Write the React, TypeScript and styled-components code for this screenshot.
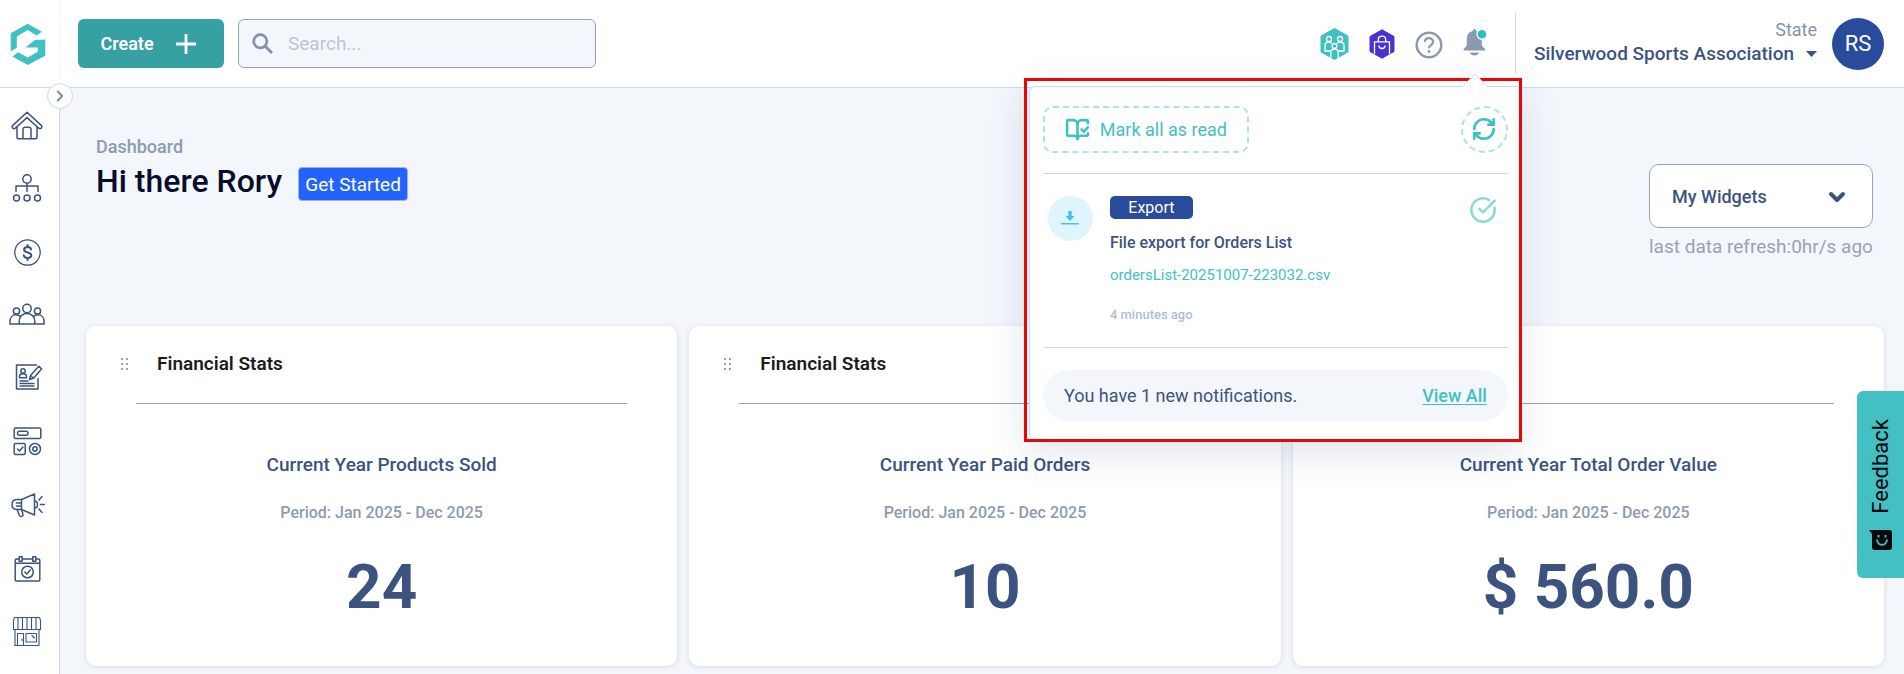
import React from 'react';
import styled, { createGlobalStyle } from 'styled-components';
import { BookOpenCheck, ChevronDown, ChevronRight, CircleCheckBig, RefreshCw } from 'lucide-react';

const color = {
  navy: '#3d537f',
  slate: '#8c9ab1',
  muted: '#8c9cae',
  teal: '#3fc1c4',
  line: '#cfdae8',
  page: '#f3f6fb',
  royal: '#294b9b',
};

const GlobalStyle = createGlobalStyle`
  *, *::before, *::after { box-sizing: border-box; }
  body { margin: 0; background: ${color.page}; font-family: Roboto, "Liberation Sans", sans-serif; color: ${color.navy}; }
  button, input, select { font-family: inherit; }
  h1, h2, h3, p, ul { margin: 0; padding: 0; }
  svg { display: block; flex: none; }
`;

const Page = styled.div`
  min-height: 100vh;
  display: grid;
  grid-template-columns: 60px 1fr;
  grid-template-rows: 88px 1fr;
`;

const Header = styled.header`
  grid-column: 1 / -1;
  display: flex;
  align-items: center;
  background: #fff;
  border-bottom: 1px solid ${color.line};
  padding-right: 20px;
  position: relative;
  z-index: 2;
`;

const LogoLink = styled.a`
  width: 60px;
  align-self: stretch;
  padding-left: 10px;
  display: flex;
  align-items: center;
  border-right: 1px solid #f3f5f9;
`;

const CreateButton = styled.button`
  width: 146px;
  height: 49px;
  margin-left: 18px;
  padding: 0 6px 0 0;
  display: flex;
  align-items: center;
  justify-content: center;
  gap: 22px;
  border: 0;
  border-radius: 6px;
  background: #36a0a3;
  color: #fff;
  font-size: 18px;
  font-weight: 600;
`;

const SearchBox = styled.label`
  width: 358px;
  height: 49px;
  margin-left: 14px;
  padding: 0 13px;
  display: flex;
  align-items: center;
  gap: 13px;
  border: 1px solid #93a4bd;
  border-radius: 6px;
  background: ${color.page};
`;

const SearchInput = styled.input`
  flex: 1;
  min-width: 0;
  border: 0;
  outline: 0;
  background: transparent;
  font-size: 19px;
  color: ${color.navy};
  &::placeholder { color: #bcc6d4; opacity: 1; }
`;

const Tools = styled.div`
  margin-left: auto;
  display: flex;
  align-items: center;
  gap: 20px;
`;

const ToolButton = styled.button`
  border: 0;
  padding: 0;
  background: none;
`;

const BellArea = styled.div`
  position: relative;
`;

const Account = styled.div`
  margin-left: 28px;
  padding-left: 18px;
  height: 61px;
  border-left: 1px solid ${color.line};
  display: flex;
  align-items: center;
  gap: 15px;
`;

const AccountText = styled.div`
  display: flex;
  flex-direction: column;
  align-items: flex-end;
  padding-bottom: 3px;
`;

const AccountLevel = styled.span`
  font-size: 18px;
  line-height: 24px;
  color: #8593ad;
`;

const OrgButton = styled.button`
  display: flex;
  align-items: center;
  gap: 12px;
  border: 0;
  padding: 0;
  background: none;
  color: ${color.navy};
  font-size: 19px;
  font-weight: 500;
  line-height: 24px;
`;

const Avatar = styled.div`
  width: 52px;
  height: 52px;
  border-radius: 50%;
  display: grid;
  place-items: center;
  background: ${color.royal};
  color: #fff;
  font-size: 22px;
`;

const Sidebar = styled.nav`
  position: relative;
  z-index: 3;
  background: #fff;
  border-right: 1px solid ${color.line};
  padding-top: 6px;
`;

const NavLink = styled.a`
  height: 63px;
  padding-left: 9px;
  display: flex;
  align-items: center;
  color: ${color.navy};
`;

const ExpandButton = styled.button`
  position: absolute;
  top: -5px;
  right: -14px;
  width: 26px;
  height: 26px;
  padding: 0;
  display: grid;
  place-items: center;
  border: 1px solid ${color.line};
  border-radius: 50%;
  background: #fff;
  color: #7d8ba3;
`;

const Main = styled.main`
  padding: 0 20px 9px 26px;
  min-width: 0;
`;

const Intro = styled.section`
  display: flex;
  justify-content: space-between;
  padding: 0 11px 65px 10px;
`;

const Greeting = styled.div`
  padding-top: 47px;
`;

const Crumb = styled.p`
  font-size: 18px;
  font-weight: 500;
  line-height: 24px;
  color: ${color.muted};
`;

const GreetingRow = styled.div`
  margin-top: 2px;
  display: flex;
  align-items: flex-end;
  gap: 16px;
`;

const Title = styled.h1`
  font-size: 32px;
  font-weight: 500;
  line-height: 40px;
  color: #080c2b;
`;

const StartButton = styled.button`
  width: 110px;
  height: 34px;
  padding: 0;
  border: 1px solid #9fb2dc;
  border-radius: 4px;
  background: #2463fb;
  color: #fff;
  font-size: 19px;
`;

const WidgetPicker = styled.div`
  padding-top: 76px;
`;

const SelectWrap = styled.div`
  position: relative;
  width: 224px;
`;

const WidgetSelect = styled.select`
  display: block;
  width: 100%;
  height: 64px;
  padding: 0 22px;
  appearance: none;
  border: 1px solid #93a4bd;
  border-radius: 10px;
  background: #fff;
  color: ${color.navy};
  font-size: 18px;
  font-weight: 500;
`;

const SelectArrow = styled.span`
  position: absolute;
  right: 24px;
  top: 21px;
  pointer-events: none;
`;

const RefreshNote = styled.p`
  margin-top: 5px;
  font-size: 19px;
  line-height: 28px;
  color: #95a4b6;
`;

const Cards = styled.section`
  display: grid;
  grid-template-columns: repeat(3, 1fr);
  gap: 12px;
`;

const Card = styled.article`
  background: #fff;
  border-radius: 10px;
  box-shadow: 0 1px 5px rgba(61, 83, 127, 0.16);
  padding-bottom: 43px;
  text-align: center;
`;

const CardHead = styled.header`
  display: flex;
  align-items: center;
  gap: 29px;
  padding: 26px 35px 27px;
`;

const CardTitle = styled.h2`
  font-size: 19px;
  font-weight: 600;
  line-height: 24px;
  color: #1c1c1e;
`;

const CardRule = styled.hr`
  margin: 0 50px;
  border: 0;
  border-top: 1px solid #97a3bd;
`;

const StatName = styled.h3`
  margin-top: 49px;
  font-size: 19px;
  font-weight: 500;
  line-height: 24px;
`;

const StatPeriod = styled.p`
  margin-top: 24px;
  font-size: 16px;
  font-weight: 500;
  line-height: 24px;
  color: ${color.muted};
`;

const StatValue = styled.p`
  margin-top: 26px;
  font-size: 62px;
  font-weight: 700;
  line-height: 72px;
`;

const Popover = styled.div`
  position: absolute;
  top: 50px;
  right: -35px;
  width: 498px;
  padding: 5px 0 0 2px;
  border: 3px solid #ea0606;
  box-shadow: 0 12px 36px rgba(30, 50, 90, 0.12);
`;

const PopoverPanel = styled.div`
  padding: 19px 11px 18px 13px;
  background: #fff;
  border: solid ${color.line};
  border-width: 1px 0 0 1px;
  border-radius: 6px 0 0 6px;
`;

const PopoverTip = styled.span`
  position: absolute;
  right: 31px;
  top: -8px;
`;

const Actions = styled.div`
  display: flex;
  justify-content: space-between;
  padding-bottom: 20px;
  border-bottom: 1px solid ${color.line};
`;

const DashedButton = styled.button<{ $round?: boolean }>`
  width: ${(p) => (p.$round ? 47 : 206)}px;
  height: 47px;
  padding: 0;
  display: flex;
  align-items: center;
  justify-content: center;
  gap: 10px;
  border: 2px dashed #a9e4e3;
  border-radius: ${(p) => (p.$round ? '50%' : '10px')};
  background: #fff;
  color: ${color.teal};
  font-size: 18px;
`;

const Notice = styled.article`
  display: flex;
  align-items: flex-start;
  padding: 22px 11px 21px 5px;
  border-bottom: 1px solid ${color.line};
`;

const NoticeIcon = styled.div`
  width: 45px;
  height: 45px;
  border-radius: 50%;
  display: grid;
  place-items: center;
  background: #dff4fc;
`;

const NoticeBody = styled.div`
  flex: 1;
  margin-left: 17px;
  display: flex;
  flex-direction: column;
  align-items: flex-start;
`;

const Badge = styled.span`
  width: 83px;
  height: 23px;
  border-radius: 5px;
  background: ${color.royal};
  color: #fff;
  font-size: 16px;
  line-height: 24px;
  text-align: center;
`;

const NoticeTitle = styled.h3`
  margin-top: 12px;
  font-size: 16px;
  font-weight: 500;
  line-height: 24px;
`;

const FileLink = styled.a`
  margin-top: 8px;
  font-size: 15px;
  line-height: 24px;
  color: ${color.teal};
  text-decoration: none;
`;

const NoticeTime = styled.time`
  margin-top: 17px;
  font-size: 13px;
  font-weight: 500;
  line-height: 22px;
  color: #b0bcd6;
`;

const Summary = styled.div`
  height: 51px;
  margin-top: 22px;
  padding: 0 21px;
  display: flex;
  align-items: center;
  justify-content: space-between;
  border-radius: 26px;
  background: ${color.page};
  font-size: 18px;
`;

const ViewAll = styled.a`
  color: ${color.teal};
  font-weight: 500;
  text-underline-offset: 2px;
`;

const Feedback = styled.button`
  position: fixed;
  right: 0;
  top: 391px;
  width: 47px;
  height: 187px;
  padding: 0;
  display: flex;
  flex-direction: column;
  align-items: center;
  justify-content: center;
  gap: 16px;
  border: 0;
  border-radius: 6px 0 0 6px;
  background: #44bfc4;
  color: #05090b;
  font-size: 22px;
  line-height: 24px;
  z-index: 4;
`;

const FeedbackLabel = styled.span`
  writing-mode: vertical-rl;
  transform: rotate(180deg);
`;

const NavIcon = ({ children }: { children: React.ReactNode }) => (
  <svg width="36" height="36" viewBox="0 0 36 36" fill="none" stroke="currentColor" strokeWidth="1.5" strokeLinecap="round" strokeLinejoin="round">
    {children}
  </svg>
);

const navItems: { name: string; art: React.ReactNode }[] = [
  {
    name: 'Home',
    art: (
      <>
        <path d="M3.5 17.600 18 4.200l14.500 13.400c1.200 1.200-.6 4.200-2.700 2.600L18 9.600 6.200 20.200c-2.100 1.600-3.900-1.400-2.700-2.600z" />
        <path d="M8 19v10c0 1.200.8 1.800 1.800 1.800h16.400c1 0 1.800-.6 1.800-1.800V19M14 30.800V21.500c0-1.300.9-2.200 2.200-2.200h3.600c1.300 0 2.200.9 2.200 2.200v9.300" />
      </>
    ),
  },
  {
    name: 'Organisation',
    art: (
      <>
        <circle cx="18" cy="8" r="4.200" />
        <path d="M18 12.500v8M7 20.500V15h22v5.500" />
        <circle cx="7.500" cy="27" r="3" />
        <circle cx="18" cy="27" r="3" />
        <circle cx="28.500" cy="27" r="3" />
      </>
    ),
  },
  {
    name: 'Finance',
    art: (
      <>
        <circle cx="18.500" cy="18.500" r="12.700" strokeWidth="1.300" />
        <path strokeWidth="2" d="M22.100 15.500c-.3-1.600-1.700-2.400-3.500-2.400-2 0-3.500 1-3.500 2.600 0 3.600 7.200 1.900 7.200 5.500 0 1.700-1.500 2.700-3.700 2.700-2 0-3.500-.9-3.800-2.600M18.600 11v2M18.600 24v2" />
      </>
    ),
  },
  {
    name: 'Members',
    art: (
      <>
        <circle cx="18" cy="11.500" r="4.200" />
        <circle cx="7.500" cy="14" r="3.100" />
        <circle cx="28.500" cy="14" r="3.100" />
        <path d="M10.200 27v-2.500c0-4.800 3.300-8 7.800-8s7.800 3.200 7.800 8V27zM10 27H1v-2.500c0-4 2.500-6.700 6-6.700 2 0 3.600.7 4.700 1.900M26 27h9v-2.500c0-4-2.500-6.700-6-6.700-2 0-3.600.7-4.700 1.900" />
      </>
    ),
  },
  {
    name: 'Registrations',
    art: (
      <>
        <path d="M29 18.500V29H7.500V5h20" />
        <circle cx="14" cy="11" r="2.200" />
        <path d="M10.500 17.700v-1.400c0-1.600 1.300-2.600 3.500-2.600s3.500 1 3.500 2.600v1.400zM11 21h8M11 23.500h14M11 26h14" />
        <path d="m20.500 19.500 1-4 8.300-9.200 2.700 2.600-8 9.300zM21.500 15.500l3 2.700" />
      </>
    ),
  },
  {
    name: 'Modules',
    art: (
      <>
        <rect x="5.200" y="5" width="26.600" height="10.500" rx="1.500" />
        <rect x="8.500" y="8.200" width="10.500" height="4" rx="2" />
        <rect x="5.200" y="20.500" width="11" height="11" rx="1.500" />
        <path d="m8.500 26 2 2 3.500-4" />
        <circle cx="26" cy="26" r="5.500" />
        <circle cx="26" cy="26" r="2.200" />
      </>
    ),
  },
  {
    name: 'Communications',
    art: (
      <>
        <path d="M12.500 13.500H8c-3 0-5 2-5 5s2 5 5 5h4.500zM12.500 13.500 25.500 8v21l-13-5.500M7.500 17h5M7.500 20h5M25.500 15c4 0 4 7 0 7" />
        <path d="m8 23.500 2.500 6c.8 1.800 4 .8 3.500-1l-1.500-5M30 14l3-3.500M31.500 18.500h4M30 23l3 3.500" />
      </>
    ),
  },
  {
    name: 'Events',
    art: (
      <g transform="translate(1 1)">
        <path d="M9 9H6.500C5.700 9 5.200 9.500 5.200 10.300v19.400c0 .8.500 1.300 1.300 1.300h22c.8 0 1.300-.5 1.300-1.300V10.300c0-.8-.5-1.300-1.300-1.300H26M12.500 9h10M5.500 13.200h24" />
        <rect x="9.200" y="6.800" width="3" height="4.400" />
        <rect x="22.800" y="6.800" width="3" height="4.400" />
        <circle cx="17.500" cy="22" r="5.800" />
        <path d="m14.800 22 2 2 3.500-4" />
      </g>
    ),
  },
  {
    name: 'Shop',
    art: (
      <g strokeWidth="1.100">
        <path d="M5.500 5.500h25l1 3v9h-27v-9zM9 5.500v12M13.500 5.500v12M18 5.500v12M22.500 5.500v12M27 5.500v12M6 17.500v16h24v-16M8.500 33.500v-12h6v12" />
        <rect x="17" y="21.500" width="10.500" height="8.500" />
        <path d="m23 23.500 2.500 2.500M13 27v1.500" />
      </g>
    ),
  },
];

const stats = [
  { name: 'Current Year Products Sold', value: '24' },
  { name: 'Current Year Paid Orders', value: '10' },
  { name: 'Current Year Total Order Value', value: '$ 560.0' },
];

const Logo = () => (
  <svg width="36" height="42" viewBox="0 0 106 124" fill="#3fc1c4">
    <path d="M52 2 94 26 79 37 52 21 20 40v33L2 84V30z" />
    <path d="M104 49v48l-52 27L7 99l17-13 28 16 30-17V72H46l27-22z" />
  </svg>
);

const FamilyHex = () => (
  <svg width="29" height="32" viewBox="0 0 29 32">
    <path d="M14.500.5 28 8v16l-13.500 7.500L1 24V8z" fill="#3fc1c4" stroke="#3fc1c4" strokeLinejoin="round" />
    <g fill="none" stroke="#fff" strokeWidth="1.300">
      <circle cx="9" cy="11" r="2.500" />
      <circle cx="20" cy="11" r="2.500" />
      <path d="M10.500 23H5v-5.500c0-2 1.500-3.500 4-3.500 1.500 0 2.500.5 3 1.500M18.500 23H24v-5.500c0-2-1.500-3.500-4-3.500-1.500 0-2.500.5-3 1.500" />
      <circle cx="14.500" cy="18" r="2.400" />
      <path d="M10.800 30v-5.500c0-2 1.500-3.500 3.700-3.500s3.700 1.500 3.700 3.500V30" />
    </g>
  </svg>
);

const BagHex = () => (
  <svg width="26" height="30" viewBox="0 0 26 30">
    <path d="M13 .8 25 7.500v15L13 29.200 1 22.500v-15z" fill="#4a32d2" stroke="#4a32d2" strokeLinejoin="round" />
    <g fill="none" stroke="#fff" strokeWidth="1.300">
      <path d="M5.500 25V12.800h15V25M9.300 12.500v-1.800C9.300 6 16.700 6 16.700 10.700v1.800M9.800 16.500c.3 4 6.100 4 6.400 0" />
    </g>
  </svg>
);

const HelpIcon = () => (
  <svg width="28" height="30" viewBox="0 0 28 30" fill="none" stroke={color.slate}>
    <circle cx="14" cy="16" r="12.300" strokeWidth="2.500" />
    <path d="M9.900 13c0-5.200 8.200-5 8.200-.3 0 3.200-4.100 3.200-4.100 6.600" strokeWidth="2.300" />
    <path d="M14 21.200v2.600" strokeWidth="2.600" />
  </svg>
);

const BellIcon = () => (
  <svg width="24" height="28" viewBox="0 0 24 28" fill={color.slate}>
    <path d="M11.500 1c1 0 1.700.8 1.700 2 3.600.8 5.600 3.800 5.600 7.600v7l3.400 3.600v1.400H.5v-1.400l3.300-3.600v-7c0-3.800 2-6.800 6-7.600 0-1.200.7-2 1.700-2zM7 24.500h9c-.8 4-8.200 4-9 0z" />
    <circle cx="19" cy="6.300" r="5.600" fill="#fff" />
    <circle cx="19" cy="6.300" r="4.300" fill="#2fbfbd" />
  </svg>
);

const NotificationPopover = () => (
  <Popover>
    <PopoverTip>
      <svg width="26" height="15" viewBox="0 0 26 15">
        <path d="M0 14 13 1l13 13" fill="#fff" stroke={color.line} />
      </svg>
    </PopoverTip>
    <PopoverPanel>
      <Actions>
        <DashedButton type="button">
          <BookOpenCheck size={25} strokeWidth={2.5} />
          Mark all as read
        </DashedButton>
        <DashedButton type="button" $round aria-label="Refresh notifications">
          <RefreshCw size={26} strokeWidth={2.5} />
        </DashedButton>
      </Actions>
      <Notice>
        <NoticeIcon>
          <svg width="18" height="14" viewBox="0 0 18 14" fill="#45c0ee">
            <path d="M7.300 0h3.400v5H13.500L9 10 4.500 5h2.800zM0 12h18v1.400H0z" />
          </svg>
        </NoticeIcon>
        <NoticeBody>
          <Badge>Export</Badge>
          <NoticeTitle>File export for Orders List</NoticeTitle>
          <FileLink href="#export">ordersList-20251007-223032.csv</FileLink>
          <NoticeTime>4 minutes ago</NoticeTime>
        </NoticeBody>
        <CircleCheckBig size={28} strokeWidth={2.2} color="#87dcda" />
      </Notice>
      <Summary>
        <span>You have 1 new notifications.</span>
        <ViewAll href="#notifications">View All</ViewAll>
      </Summary>
    </PopoverPanel>
  </Popover>
);

export default function App() {
  return (
    <>
      <GlobalStyle />
      <Page>
        <Header>
          <LogoLink href="#home" aria-label="Home">
            <Logo />
          </LogoLink>
          <CreateButton type="button">
            Create
            <svg width="20" height="20" viewBox="0 0 20 20" stroke="#fff" strokeWidth="2.800">
              <path d="M10 0v20M0 10h20" />
            </svg>
          </CreateButton>
          <SearchBox>
            <svg width="21" height="21" viewBox="0 0 21 21" fill="none" stroke="#8492ad" strokeWidth="2.800">
              <circle cx="8.300" cy="8.300" r="6.600" />
              <path d="m13 13 7 7" strokeWidth="3" />
            </svg>
            <SearchInput type="search" placeholder="Search..." aria-label="Search" />
          </SearchBox>
          <Tools>
            <ToolButton type="button" aria-label="Groups">
              <FamilyHex />
            </ToolButton>
            <ToolButton type="button" aria-label="Store">
              <BagHex />
            </ToolButton>
            <ToolButton type="button" aria-label="Help">
              <HelpIcon />
            </ToolButton>
            <BellArea>
              <ToolButton type="button" aria-label="Notifications">
                <BellIcon />
              </ToolButton>
              <NotificationPopover />
            </BellArea>
          </Tools>
          <Account>
            <AccountText>
              <AccountLevel>State</AccountLevel>
              <OrgButton type="button">
                Silverwood Sports Association
                <svg width="11" height="6" viewBox="0 0 11 6" fill="currentColor">
                  <path d="M0 0h11L5.500 6z" />
                </svg>
              </OrgButton>
            </AccountText>
            <Avatar>RS</Avatar>
          </Account>
        </Header>
        <Sidebar>
          <ExpandButton type="button" aria-label="Expand menu">
            <ChevronRight size={18} strokeWidth={2.5} />
          </ExpandButton>
          {navItems.map((item) => (
            <NavLink key={item.name} href={`#${item.name.toLowerCase()}`} aria-label={item.name}>
              <NavIcon>{item.art}</NavIcon>
            </NavLink>
          ))}
        </Sidebar>
        <Main>
          <Intro>
            <Greeting>
              <Crumb>Dashboard</Crumb>
              <GreetingRow>
                <Title>Hi there Rory</Title>
                <StartButton type="button">Get Started</StartButton>
              </GreetingRow>
            </Greeting>
            <WidgetPicker>
              <SelectWrap>
                <WidgetSelect aria-label="Widgets" defaultValue="mine">
                  <option value="mine">My Widgets</option>
                </WidgetSelect>
                <SelectArrow>
                  <ChevronDown size={24} strokeWidth={4} />
                </SelectArrow>
              </SelectWrap>
              <RefreshNote>last data refresh:0hr/s ago</RefreshNote>
            </WidgetPicker>
          </Intro>
          <Cards>
            {stats.map((stat) => (
              <Card key={stat.name}>
                <CardHead>
                  <svg width="7" height="12" viewBox="0 0 7 12" fill="#94a1b8">
                    <path d="M0 0h2v2H0zM5 0h2v2H5zM0 5h2v2H0zM5 5h2v2H5zM0 10h2v2H0zM5 10h2v2H5z" />
                  </svg>
                  <CardTitle>Financial Stats</CardTitle>
                </CardHead>
                <CardRule />
                <StatName>{stat.name}</StatName>
                <StatPeriod>Period: Jan 2025 - Dec 2025</StatPeriod>
                <StatValue>{stat.value}</StatValue>
              </Card>
            ))}
          </Cards>
        </Main>
      </Page>
      <Feedback type="button">
        <FeedbackLabel>Feedback</FeedbackLabel>
        <svg width="23" height="20" viewBox="0 0 23 20">
          <path d="M0 0h20.500C22 0 23 1 23 2.500v15c0 1.500-1 2.500-2.500 2.500h-15C4 20 3 19 3 17.500V4z" fill="#05090b" />
          <path d="M8 9.500c.6 7 9.400 7 10 0" fill="none" stroke="#44bfc4" strokeWidth="1.800" />
          <path d="M8.500 5h2v2.400h-2zM15.500 5h2v2.400h-2z" fill="#44bfc4" />
        </svg>
      </Feedback>
    </>
  );
}
